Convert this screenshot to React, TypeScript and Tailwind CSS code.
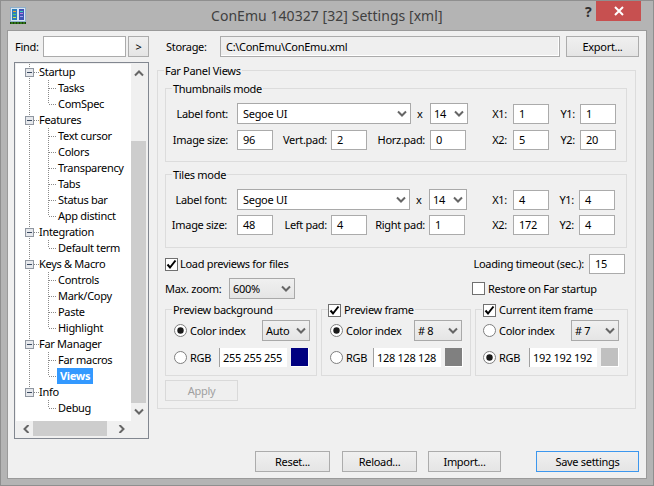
import type { ReactNode } from 'react';

const treeItems = [
    { label: 'Startup', parent: true },
    { label: 'Tasks' },
    { label: 'ComSpec', last: true },
    { label: 'Features', parent: true },
    { label: 'Text cursor' },
    { label: 'Colors' },
    { label: 'Transparency' },
    { label: 'Tabs' },
    { label: 'Status bar' },
    { label: 'App distinct', last: true },
    { label: 'Integration', parent: true },
    { label: 'Default term', last: true },
    { label: 'Keys & Macro', parent: true },
    { label: 'Controls' },
    { label: 'Mark/Copy' },
    { label: 'Paste' },
    { label: 'Highlight', last: true },
    { label: 'Far Manager', parent: true },
    { label: 'Far macros' },
    { label: 'Views', last: true, selected: true },
    { label: 'Info', parent: true, end: true },
    { label: 'Debug', last: true, end: true },
];

type TreeItem = { label: string; parent?: boolean; last?: boolean; selected?: boolean; end?: boolean };

function TreeRow({ item }: { item: TreeItem }) {
    if (item.parent) {
        return (
            <div className="flex h-4 items-center">
                <svg width="23" height="16" className="shrink-0">
                    <line x1="13.5" y1="0" x2="13.5" y2={item.end ? 4 : 16} stroke="#8a8a8a" strokeDasharray="1 1" />
                    <line x1="18" y1="8.5" x2="23" y2="8.5" stroke="#8a8a8a" strokeDasharray="1 1" />
                    <rect x="9.5" y="4.5" width="8" height="8" fill="#e6e8ec" stroke="#8f96a0" />
                    <line x1="11" y1="8.5" x2="16" y2="8.5" stroke="#3a4a60" />
                </svg>
                <span>{item.label}</span>
            </div>
        );
    }
    return (
        <div className="flex h-4 items-center">
            <svg width="41" height="16" className="shrink-0">
                {!item.end && <line x1="13.5" y1="0" x2="13.5" y2="16" stroke="#8a8a8a" strokeDasharray="1 1" />}
                <line x1="32.5" y1="0" x2="32.5" y2={item.last ? 8 : 16} stroke="#8a8a8a" strokeDasharray="1 1" />
                <line x1="33" y1="8.5" x2="41" y2="8.5" stroke="#8a8a8a" strokeDasharray="1 1" />
            </svg>
            {item.selected ? (
                <span className="flex h-4 w-9 items-center justify-center bg-[#3399ff] font-bold text-white">{item.label}</span>
            ) : (
                <span className="px-px">{item.label}</span>
            )}
        </div>
    );
}

function Chevron({ dir = 'down' }: { dir?: 'down' | 'up' | 'left' | 'right' }) {
    const pts = {
        down: '1,1.5 5,5.5 9,1.5',
        up: '1,5.5 5,1.5 9,5.5',
        left: '5.5,0 1.5,4 5.5,8',
        right: '1.5,0 5.5,4 1.5,8',
    }[dir];
    const vertical = dir === 'down' || dir === 'up';
    return (
        <svg width={vertical ? 10 : 7} height={vertical ? 7 : 8} className="shrink-0">
            <polyline points={pts} fill="none" stroke="#666666" strokeWidth="2" />
        </svg>
    );
}

function Button({ children, className = '' }: { children: ReactNode; className?: string }) {
    return (
        <div
            className={`flex h-[21px] items-center justify-center border border-[#acacac] bg-gradient-to-b from-[#f0f0f0] to-[#e5e5e5] ${className}`}
        >
            {children}
        </div>
    );
}

function Field({ children, className = '' }: { children: ReactNode; className?: string }) {
    return <div className={`flex h-5 shrink-0 items-center border border-[#ababab] bg-white pl-[5px] ${className}`}>{children}</div>;
}

function Combo({ children, className = '', flat = false }: { children: ReactNode; className?: string; flat?: boolean }) {
    return (
        <div
            className={`flex h-[21px] shrink-0 items-center justify-between border border-[#a9a9a9] pl-[3px] pr-[3px] ${
                flat ? 'bg-white' : 'bg-gradient-to-b from-[#f0f0f0] to-[#e5e5e5]'
            } ${className}`}
        >
            <span>{children}</span>
            <Chevron />
        </div>
    );
}

function Check({ checked = false }: { checked?: boolean }) {
    return (
        <svg width="13" height="13" className="shrink-0">
            <rect x="0.5" y="0.5" width="12" height="12" fill="#ffffff" stroke="#707070" />
            {checked && <polyline points="2.5,6.5 5,9.5 10.5,2.5" fill="none" stroke="#000000" strokeWidth="2" />}
        </svg>
    );
}

function Radio({ on = false }: { on?: boolean }) {
    return (
        <svg width="13" height="13" className="shrink-0">
            <circle cx="6.5" cy="6.5" r="6" fill="#ffffff" stroke="#7e7e7e" />
            {on && <circle cx="6.5" cy="6.5" r="3.2" fill="#1a1a1a" />}
        </svg>
    );
}

function Group({ title, children, className = '' }: { title: ReactNode; children?: ReactNode; className?: string }) {
    return (
        <div className={`relative shrink-0 border border-[#dcdcdc] ${className}`}>
            <div className="absolute -top-[8px] left-[6px] flex items-center bg-[#f0f0f0] px-px leading-4">{title}</div>
            {children}
        </div>
    );
}

function ColorRows({
    firstWidth,
    secondWidth,
    pad,
    index,
    rgb,
    color,
    rgbOn,
}: {
    firstWidth: string;
    secondWidth: string;
    pad: string;
    index: string;
    rgb: string;
    color: string;
    rgbOn?: boolean;
}) {
    return (
        <div className={`flex flex-col gap-[7px] pt-[10px] ${pad}`}>
            <div className="flex items-center">
                <div className={`flex items-center gap-[3px] ${firstWidth}`}>
                    <Radio on={!rgbOn} />
                    <span>Color index</span>
                </div>
                <Combo className="w-12">{index}</Combo>
            </div>
            <div className="flex items-center">
                <div className={`flex items-center gap-[3px] ${secondWidth}`}>
                    <Radio on={rgbOn} />
                    <span>RGB</span>
                </div>
                <div className="flex h-[19px] w-[68px] items-center border-l border-[#a0a0a0] bg-white pl-[3px]">{rgb}</div>
                <div className="ml-1 h-[19px] w-[18px] border-r border-b border-white" style={{ backgroundColor: color }} />
            </div>
        </div>
    );
}

export default function App() {
    return (
        <div className="flex h-[486px] w-[654px] flex-col overflow-hidden border border-[#8f8f8f] bg-[#b4b4b4] px-[6px] font-['Noto_Sans',sans-serif] text-[11px] leading-4 tracking-[-0.3px] text-black">
            {/* Title bar */}
            <div className="-mx-[6px] flex h-[29px] shrink-0 items-start">
                <svg width="17" height="17" className="ml-[9px] mt-[6px] shrink-0">
                    <rect x="0.5" y="0.5" width="15" height="14" fill="#d8e6f2" stroke="#8fb0cc" />
                    <rect x="2" y="2" width="5" height="11" fill="#2d7fb8" />
                    <rect x="9" y="2" width="5" height="11" fill="#3f55b5" />
                    <rect x="3" y="4" width="3" height="1" fill="#f0a030" />
                    <rect x="3" y="7" width="3" height="1" fill="#50d070" />
                    <rect x="3" y="10" width="3" height="1" fill="#d0e050" />
                    <rect x="10" y="4" width="3" height="1" fill="#40d0c0" />
                    <rect x="10" y="6" width="3" height="1" fill="#c080e0" />
                    <rect x="10" y="9" width="3" height="1" fill="#a0a0f0" />
                    <rect x="0" y="15" width="16" height="2" fill="#1d3a10" />
                    <line x1="1" y1="16" x2="16" y2="16" stroke="#40b020" strokeDasharray="2 1" />
                </svg>
                <div className="ml-[184px] mt-[5px] w-[260px] whitespace-nowrap text-[14px] leading-5 tracking-[0.05px] text-[#404040]">
                    ConEmu 140327 [32] Settings [xml]
                </div>
                <div className="ml-[114px] mt-[3px] w-[10px] text-[14px] font-bold leading-4 text-[#303030]">?</div>
                <div className="ml-px flex h-[20px] w-[45px] shrink-0 items-center justify-center bg-[#c75050]">
                    <svg width="10" height="10">
                        <path d="M1 1 L9 9 M9 1 L1 9" stroke="#ffffff" strokeWidth="2" />
                    </svg>
                </div>
            </div>

            {/* Client area */}
            <div className="flex h-[449px] w-[640px] shrink-0 gap-2 border border-[#9a9a9a] bg-[#f0f0f0] pl-[6px] pt-[5px]">
                {/* Left column */}
                <div className="flex w-[135px] shrink-0 flex-col">
                    <div className="flex h-[21px] items-center">
                        <span className="w-[29px] pl-px">Find:</span>
                        <div className="h-[21px] w-[83px] border border-[#ababab] bg-white" />
                        <Button className="ml-[2px] w-[21px]">&gt;</Button>
                    </div>
                    <div className="mt-[5px] flex h-[377px] flex-col border border-[#828790] bg-[#f0f0f0] pb-[2px] pl-px pr-[2px] pt-px">
                        <div className="flex min-h-0 flex-1">
                            <div className="flex-1 overflow-hidden bg-white">
                                {treeItems.map((item) => (
                                    <TreeRow key={item.label} item={item} />
                                ))}
                            </div>
                            <div className="flex w-[15px] shrink-0 flex-col items-center">
                                <div className="flex h-[77px] w-full justify-center pt-[6px]">
                                    <Chevron dir="up" />
                                </div>
                                <div className="h-[262px] w-full bg-[#cdcdcd]" />
                                <div className="pt-[5px]">
                                    <Chevron />
                                </div>
                            </div>
                        </div>
                        <div className="flex h-[15px] shrink-0 items-center">
                            <div className="flex w-[17px] justify-center pl-[3px]">
                                <Chevron dir="left" />
                            </div>
                            <div className="h-full w-[74px] bg-[#cdcdcd]" />
                            <div className="flex w-[26px] justify-center pl-[3px]">
                                <Chevron dir="right" />
                            </div>
                        </div>
                    </div>
                </div>

                {/* Right column */}
                <div className="flex w-[482px] shrink-0 flex-col">
                    <div className="flex h-[21px] items-center">
                        <span className="w-[63px] pl-[9px]">Storage:</span>
                        <div className="flex h-[21px] w-[340px] items-center border border-[#ababab] bg-[#efefef] pl-[5px] shadow-[inset_-1px_-1px_0_#ffffff]">
                            C:\ConEmu\ConEmu.xml
                        </div>
                        <Button className="ml-[6px] w-[73px]">Export...</Button>
                    </div>

                    <Group title="Far Panel Views" className="mt-[13px] h-[339px] w-[479px] pl-[7px] pt-[17px]">
                        <Group title="Thumbnails mode" className="h-[74px] w-[462px] pt-[14px]">
                            <div className="flex items-center">
                                <span className="w-[62px] text-right">Label font:</span>
                                <Combo flat className="ml-[9px] w-[174px] pl-[5px]">
                                    Segoe UI
                                </Combo>
                                <span className="ml-[6px] w-[13px]">x</span>
                                <Combo flat className="w-[38px]">
                                    14
                                </Combo>
                                <span className="w-[39px] text-right">X1:</span>
                                <Field className="ml-[6px] w-9">1</Field>
                                <span className="w-[26px] text-right">Y1:</span>
                                <Field className="ml-[5px] w-9">1</Field>
                            </div>
                            <div className="mt-[6px] flex items-center">
                                <span className="w-[62px] text-right">Image size:</span>
                                <Field className="ml-[9px] w-9">96</Field>
                                <span className="w-[54px] text-right">Vert.pad:</span>
                                <Field className="ml-1 w-9">2</Field>
                                <span className="w-[58px] text-right">Horz.pad:</span>
                                <Field className="ml-[5px] w-9">0</Field>
                                <span className="w-[41px] text-right">X2:</span>
                                <Field className="ml-[6px] w-9">5</Field>
                                <span className="w-[26px] text-right">Y2:</span>
                                <Field className="ml-[5px] w-9">20</Field>
                            </div>
                        </Group>

                        <Group title="Tiles mode" className="mt-3 h-[74px] w-[462px] pt-[14px]">
                            <div className="flex items-center">
                                <span className="w-[61px] text-right">Label font:</span>
                                <Combo flat className="ml-[10px] w-[173px] pl-[5px]">
                                    Segoe UI
                                </Combo>
                                <span className="ml-[6px] w-[13px]">x</span>
                                <Combo flat className="w-[38px]">
                                    14
                                </Combo>
                                <span className="w-[40px] text-right">X1:</span>
                                <Field className="ml-[6px] w-9">4</Field>
                                <span className="w-[25px] text-right">Y1:</span>
                                <Field className="ml-[5px] w-9">4</Field>
                            </div>
                            <div className="mt-[5px] flex items-center">
                                <span className="w-[61px] text-right">Image size:</span>
                                <Field className="ml-[10px] w-9">48</Field>
                                <span className="w-[54px] text-right">Left pad:</span>
                                <Field className="ml-1 w-9">4</Field>
                                <span className="w-[58px] text-right">Right pad:</span>
                                <Field className="ml-1 w-9">1</Field>
                                <span className="w-[42px] text-right">X2:</span>
                                <Field className="ml-[6px] w-9">172</Field>
                                <span className="w-[25px] text-right">Y2:</span>
                                <Field className="ml-[5px] w-9">4</Field>
                            </div>
                        </Group>

                        <div className="mt-[6px] flex h-5 w-[460px] items-center">
                            <Check checked />
                            <span className="ml-[2px]">Load previews for files</span>
                            <span className="ml-auto">Loading timeout (sec.):</span>
                            <Field className="ml-[5px] w-9">15</Field>
                        </div>

                        <div className="mt-1 flex h-[21px] items-center">
                            <span className="w-16">Max. zoom:</span>
                            <Combo className="w-[66px] pl-[3px]">600%</Combo>
                            <div className="ml-[177px] flex items-center gap-[3px]">
                                <Check />
                                <span>Restore on Far startup</span>
                            </div>
                        </div>

                        <div className="mt-[10px] flex h-[67px] gap-1">
                            <Group title="Preview background" className="h-[67px] w-[152px]">
                                <ColorRows firstWidth="w-[88px]" secondWidth="w-[45px]" pad="pl-2" index="Auto" rgb="255 255 255" color="#000080" />
                            </Group>
                            <Group
                                title={
                                    <div className="-ml-px flex items-center">
                                        <Check checked />
                                        <span className="ml-[3px]">Preview frame</span>
                                    </div>
                                }
                                className="h-[67px] w-[150px]"
                            >
                                <ColorRows firstWidth="w-[84px]" secondWidth="w-[43px]" pad="pl-2" index="# 8" rgb="128 128 128" color="#808080" />
                            </Group>
                            <Group
                                title={
                                    <>
                                        <Check checked />
                                        <span className="ml-[3px]">Current item frame</span>
                                    </>
                                }
                                className="h-[67px] w-[153px]"
                            >
                                <ColorRows firstWidth="w-[88px]" secondWidth="w-[46px]" pad="pl-[7px]" index="# 7" rgb="192 192 192" color="#c0c0c0" rgbOn />
                            </Group>
                        </div>

                        <div className="mt-1 flex h-[21px] w-[73px] items-center justify-center border border-[#d9d9d9] bg-[#efefef] text-[#a0a0a0]">
                            Apply
                        </div>
                    </Group>

                    {/* Bottom buttons */}
                    <div className="mt-[42px] flex justify-end">
                        <Button className="w-[75px]">Reset...</Button>
                        <Button className="ml-3 w-[75px]">Reload...</Button>
                        <Button className="ml-[11px] w-[73px]">Import...</Button>
                        <Button className="ml-[35px] w-[103px] !border-[#3c97ee]">Save settings</Button>
                    </div>
                </div>
            </div>
        </div>
    );
}
